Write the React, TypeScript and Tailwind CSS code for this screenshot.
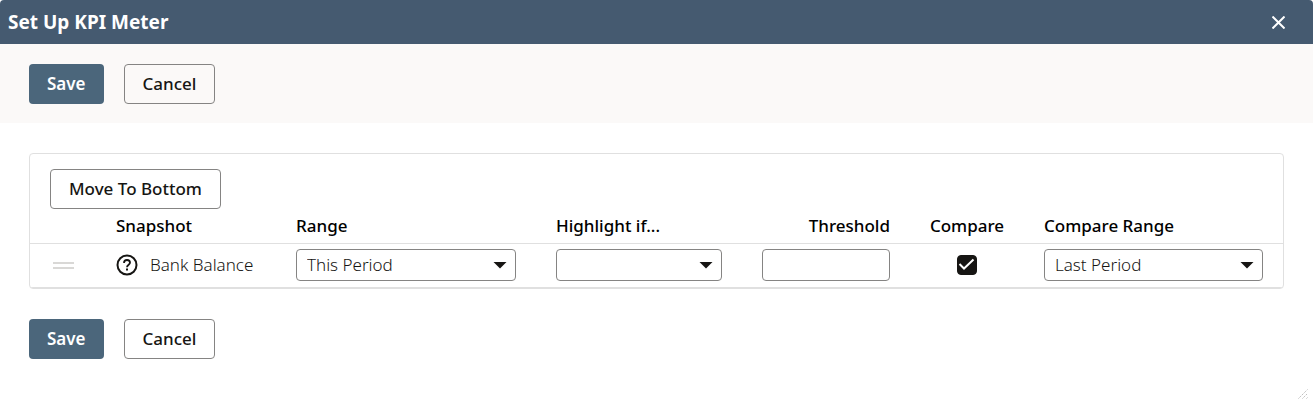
import { useState } from 'react';

type SelectProps = {
  label: string;
  value: string;
  options: string[];
  onChange: (value: string) => void;
};

// Drop-down with the solid caret on the right
function SelectField({ label, value, options, onChange }: SelectProps) {
  return (
    <div className="relative">
      <select
        aria-label={label}
        value={value}
        onChange={(e) => onChange(e.target.value)}
        className="block w-full h-8 appearance-none rounded border border-[#858483] bg-white pl-[10px] pr-8 font-light text-[#161513]"
      >
        {options.map((option) => (
          <option key={option} value={option}>
            {option}
          </option>
        ))}
      </select>
      <svg
        width="14"
        height="7"
        viewBox="0 0 14 7"
        className="pointer-events-none absolute right-[9px] top-[13px]"
        aria-hidden="true"
      >
        <path d="M0.5 0H13.5L7 6.5Z" fill="#161513" />
      </svg>
    </div>
  );
}

// Save / Cancel pair, shown above and below the table
function FormActions() {
  return (
    <div className="flex gap-5">
      <button type="submit" className="h-10 rounded bg-[#4b667b] px-[18px] font-semibold text-white">
        Save
      </button>
      <button type="button" className="h-10 rounded border border-[#858483] px-[18px] font-medium text-[#161513]">
        Cancel
      </button>
    </div>
  );
}

function DragHandle() {
  return (
    <svg width="21" height="7" viewBox="0 0 21 7" className="cursor-move" aria-hidden="true">
      <path d="M0 1H21M0 6H21" stroke="#d9d8d6" strokeWidth="2" />
    </svg>
  );
}

function HelpIcon() {
  return (
    <svg width="22" height="22" viewBox="0 0 22 22" fill="none" stroke="#161513" aria-hidden="true">
      <circle cx="11" cy="11" r="9.5" strokeWidth="2" />
      <path d="M8 9C8 7.2 9.2 6 11 6s3 1.1 3 2.7c0 1.9-3 2.2-3 4.6" strokeWidth="1.8" />
      <path d="M11 14.6v2" strokeWidth="2" />
    </svg>
  );
}

const PERIODS = ['This Period', 'Last Period', 'This Year', 'Last Year'];
const HIGHLIGHTS = ['', 'Greater Than', 'Less Than'];

function SnapshotTable() {
  const [range, setRange] = useState('This Period');
  const [highlight, setHighlight] = useState('');
  const [threshold, setThreshold] = useState('');
  const [compare, setCompare] = useState(true);
  const [compareRange, setCompareRange] = useState('Last Period');

  return (
    <table className="w-full table-fixed">
      <colgroup>
        <col className="w-[66px]" />
        <col className="w-[180px]" />
        <col className="w-[260px]" />
        <col className="w-[206px]" />
        <col className="w-[168px]" />
        <col className="w-[114px]" />
        <col className="w-[259px]" />
      </colgroup>
      <thead>
        <tr className="h-[34px] border-b border-[#e0e0e0] text-left text-black [&>th]:px-5 [&>th]:font-medium [&>th]:whitespace-nowrap">
          <td />
          <th scope="col">Snapshot</th>
          <th scope="col">Range</th>
          <th scope="col">Highlight if...</th>
          <th scope="col" className="text-right">Threshold</th>
          <th scope="col">
            <span className="flex justify-center">Compare</span>
          </th>
          <th scope="col">Compare Range</th>
        </tr>
      </thead>
      <tbody>
        <tr className="h-11 border-b border-[#e0e0e0] [&>td]:px-5">
          <td>
            <div className="flex justify-center">
              <DragHandle />
            </div>
          </td>
          <td>
            <div className="flex items-center gap-3 whitespace-nowrap font-light">
              <HelpIcon />
              Bank Balance
            </div>
          </td>
          <td>
            <SelectField label="Range" value={range} options={PERIODS} onChange={setRange} />
          </td>
          <td>
            <SelectField label="Highlight if" value={highlight} options={HIGHLIGHTS} onChange={setHighlight} />
          </td>
          <td>
            <input
              type="text"
              aria-label="Threshold"
              value={threshold}
              onChange={(e) => setThreshold(e.target.value)}
              className="block h-8 w-full rounded border border-[#858483] px-2 text-right font-light"
            />
          </td>
          <td>
            <div className="mx-auto grid size-5">
              <input
                type="checkbox"
                aria-label="Compare"
                checked={compare}
                onChange={(e) => setCompare(e.target.checked)}
                className="col-start-1 row-start-1 size-5 appearance-none rounded border border-[#161513] checked:bg-[#161513]"
              />
              <svg viewBox="0 0 20 20" className="pointer-events-none col-start-1 row-start-1 size-5" aria-hidden="true">
                <path d="M2.5 9L7 13.5L16.5 4.5" fill="none" stroke="#fff" strokeWidth="2" />
              </svg>
            </div>
          </td>
          <td>
            <SelectField label="Compare Range" value={compareRange} options={PERIODS} onChange={setCompareRange} />
          </td>
        </tr>
      </tbody>
    </table>
  );
}

export default function App() {
  return (
    <div className="min-h-screen bg-white font-['Noto_Sans','Open_Sans',sans-serif] text-[17px] leading-6 text-[#161513]">
      <header className="flex h-11 items-center justify-between rounded-t bg-[#455a70] pl-2 pr-6">
        <h1 className="text-[19px] font-bold text-white">Set Up KPI Meter</h1>
        <button type="button" aria-label="Close" className="p-1">
          <svg width="13" height="13" viewBox="0 0 13 13" aria-hidden="true">
            <path d="M0.5 0.5L12.5 12.5M12.5 0.5L0.5 12.5" stroke="#fff" strokeWidth="2" />
          </svg>
        </button>
      </header>

      <form onSubmit={(e) => e.preventDefault()}>
        <div className="bg-[#fbf9f8] px-[29px] pt-5 pb-[19px]">
          <FormActions />
        </div>

        <div className="px-[29px] py-[30px]">
          <section className="mb-[30px] overflow-hidden rounded border border-[#e0e0e0]">
            <div className="px-5 pt-[15px]">
              <button type="button" className="h-10 rounded border border-[#858483] px-[18px] font-medium">
                Move To Bottom
              </button>
            </div>
            <SnapshotTable />
          </section>
          <FormActions />
        </div>
      </form>

      {/* Resize grip of the window */}
      <svg width="10" height="10" viewBox="0 0 10 10" className="fixed right-[5px] bottom-[3px]" aria-hidden="true">
        <path d="M0.5 9.5L9.5 0.5M4.5 9.5L9.5 4.5M8.5 9.5L9.5 8.5" stroke="#b5b5b5" strokeDasharray="1.4 1" />
      </svg>
    </div>
  );
}
